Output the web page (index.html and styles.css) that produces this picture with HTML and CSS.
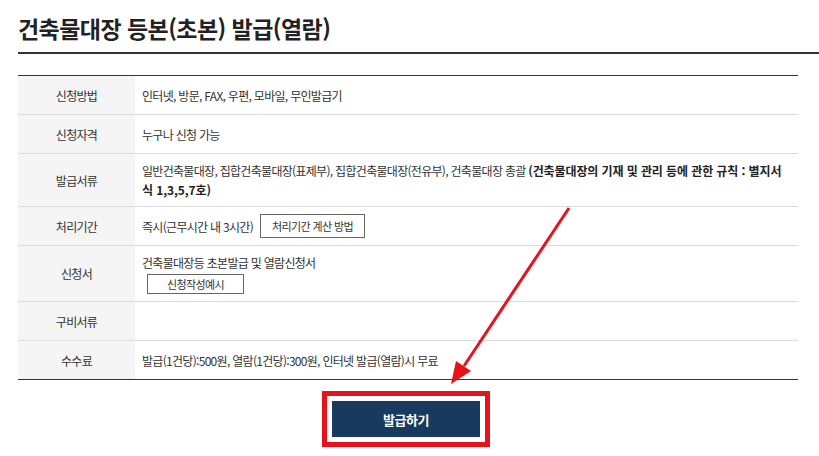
FILE: index.html
```html
<!DOCTYPE html>
<html lang="ko">
<head>
<meta charset="utf-8">
<title>건축물대장 등본(초본) 발급(열람)</title>
<link rel="stylesheet" href="styles.css">
</head>
<body>
<div class="page">
  <h1 class="title">건축물대장 등본(초본) 발급(열람)</h1>
  <div class="info">
    <div class="row"><div class="th">신청방법</div><div class="td">인터넷, 방문, FAX, 우편, 모바일, 무인발급기</div></div>
    <div class="row"><div class="th">신청자격</div><div class="td">누구나 신청 가능</div></div>
    <div class="row"><div class="th">발급서류</div><div class="td"><p>일반건축물대장, 집합건축물대장(표제부), 집합건축물대장(전유부), 건축물대장 총괄 <b>(건축물대장의 기재 및 관리 등에 관한 규칙 : 별지서식 1,3,5,7호)</b></p></div></div>
    <div class="row"><div class="th">처리기간</div><div class="td"><span>즉시(근무시간 내 3시간)</span><button class="sbtn sbtn-lg">처리기간 계산 방법</button></div></div>
    <div class="row"><div class="th">신청서</div><div class="td stack"><span>건축물대장등 초본발급 및 열람신청서</span><button class="sbtn sbtn-sm">신청작성예시</button></div></div>
    <div class="row"><div class="th">구비서류</div><div class="td"></div></div>
    <div class="row"><div class="th">수수료</div><div class="td">발급(1건당):500원, 열람(1건당):300원, 인터넷 발급(열람)시 무료</div></div>
  </div>
  <div class="actions">
    <div class="highlight"><button class="issue">발급하기</button></div>
  </div>
</div>
<svg class="arrow" width="819" height="456" viewBox="0 0 819 456" aria-hidden="true">
  <line x1="569" y1="208" x2="464" y2="366" stroke="#e8121a" stroke-width="3"/>
  <polygon points="451,384 471,371 456,361" fill="#e8121a"/>
</svg>
</body>
</html>
```
FILE: styles.css
```css
* { box-sizing: border-box; }
html, body { margin: 0; padding: 0; background: #fff; }
body {
  font-family: "Noto Sans CJK KR", "Noto Sans", sans-serif;
  color: #333;
  width: 819px;
  height: 456px;
  overflow: hidden;
  position: relative;
}
.page { padding: 13px 21px 0 18px; }
.title {
  margin: 0 -21px 0 0;
  font-size: 23px;
  line-height: 30px;
  font-weight: 700;
  letter-spacing: -0.55px;
  color: #222;
  padding-bottom: 9px;
  border-bottom: 2px solid #333;
}
.info {
  margin-top: 21px;
  border-top: 1px solid #333;
  border-bottom: 1px solid #333;
  font-size: 12px;
  letter-spacing: -0.7px;
  line-height: 19px;
}
.row {
  display: flex;
  min-height: 39px;
  border-bottom: 1px solid #dcdcdc;
}
.row:last-child { border-bottom: 0; min-height: 38px; }
.th {
  width: 117px;
  flex: none;
  background: #f5f5f5;
  display: flex;
  align-items: center;
  justify-content: center;
}
.td {
  flex: 1;
  display: flex;
  align-items: center;
  padding: 7px 10px 7px 7px;
}
.td p { margin: 0; }
.td b { font-weight: 700; color: #222; letter-spacing: -0.1px; }
.td.stack { flex-direction: column; align-items: flex-start; }
.sbtn {
  font-family: inherit;
  color: #333;
  background: #fff;
  border: 1px solid #666;
  font-size: 11px;
  letter-spacing: -0.6px;
  padding: 0;
  margin: 0;
}
.sbtn-lg { width: 105px; height: 24px; margin-left: 7px; }
.sbtn-sm { width: 97px; height: 20px; margin: 2px 0 0 5px; }
.actions {
  display: flex;
  justify-content: center;
  margin-top: 11px;
  padding-right: 4px;
}
.highlight {
  border: 5px solid #e8121a;
  padding: 5px;
}
.issue {
  display: block;
  width: 148px;
  height: 36px;
  border: 0;
  background: #173a5e;
  color: #fff;
  font-family: inherit;
  font-size: 13px;
  font-weight: 700;
  letter-spacing: -0.5px;
}
.arrow { position: absolute; left: 0; top: 0; pointer-events: none; }
```
